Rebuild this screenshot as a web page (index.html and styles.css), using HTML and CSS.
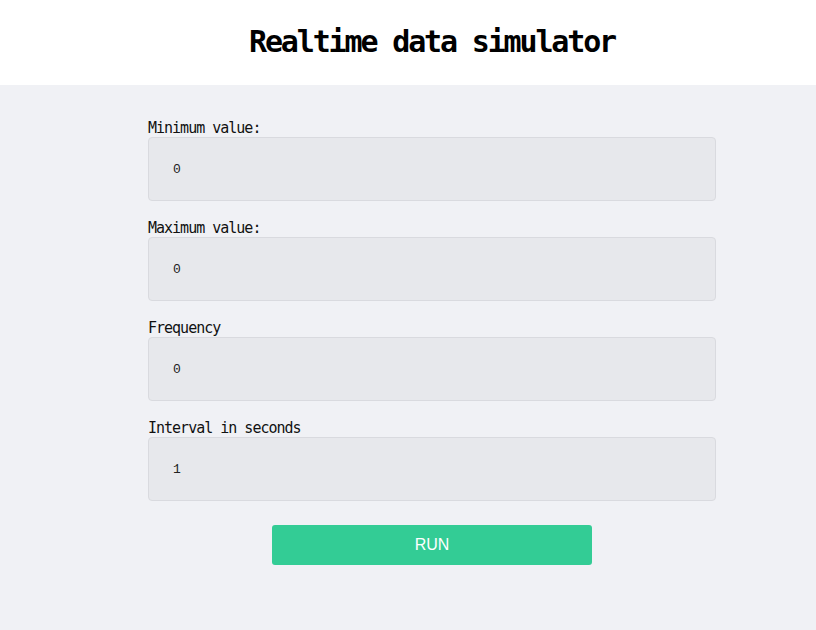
FILE: index.html
```html
<!DOCTYPE html>
<html>
<head>
<meta charset="utf-8">
<link rel="stylesheet" href="styles.css">
</head>
<body>
<header class="header">
  <div class="column">
    <h1 class="title">Realtime data simulator</h1>
  </div>
</header>
<main class="main">
  <form class="column form">
    <div class="field">
      <label class="label">Minimum value:</label>
      <input class="input" type="text" value="0">
    </div>
    <div class="field">
      <label class="label">Maximum value:</label>
      <input class="input" type="text" value="0">
    </div>
    <div class="field">
      <label class="label">Frequency</label>
      <input class="input" type="text" value="0">
    </div>
    <div class="field">
      <label class="label">Interval in seconds</label>
      <input class="input" type="text" value="1">
    </div>
    <div class="actions">
      <button class="button" type="button">RUN</button>
    </div>
  </form>
</main>
</body>
</html>
```
FILE: styles.css
```css
html, body {
  margin: 0;
  padding: 0;
  height: 100%;
}
body {
  background: #f0f1f5;
  font-family: "DejaVu Sans Mono", monospace;
  color: #111;
  display: flex;
  flex-direction: column;
}
.column {
  width: 568px;
  margin-left: 148px;
}
.header {
  background: #ffffff;
  height: 85px;
  box-sizing: border-box;
}
.title {
  margin: 0;
  padding-top: 24px;
  text-align: center;
  font-size: 30px;
  line-height: 36px;
  font-weight: bold;
  letter-spacing: -2.15px;
  color: #000;
}
.main {
  flex: 1;
  background: #f0f1f5;
  padding-top: 34px;
}
.form {
  display: flex;
  flex-direction: column;
}
.field {
  display: flex;
  flex-direction: column;
  margin-bottom: 18px;
}
.label {
  font-size: 15px;
  line-height: 18px;
  letter-spacing: -1px;
  color: #111;
}
.input {
  height: 64px;
  box-sizing: border-box;
  border: 1px solid #d9dadf;
  border-radius: 4px;
  background: #e7e8ec;
  padding: 1px 0 0 24px;
  font-family: "Liberation Mono", monospace;
  font-size: 13px;
  color: #222;
  outline: none;
}
.actions {
  display: flex;
  justify-content: center;
  padding-top: 6px;
}
.button {
  width: 320px;
  height: 40px;
  border: none;
  border-radius: 3px;
  background: #33cc95;
  color: #ffffff;
  font-family: "Liberation Sans", Arial, sans-serif;
  font-size: 16px;
  cursor: pointer;
}
```
